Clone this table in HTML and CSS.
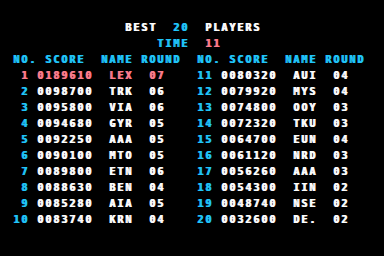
FILE: index.html
```html
<!DOCTYPE html>
<html>
<head>
<meta charset="utf-8">
<link rel="stylesheet" href="styles.css">
</head>
<body>
<main class="screen">
  <div class="line title"><span class="w">BEST</span>  <span class="c">20</span>  <span class="w">PLAYERS</span></div>
  <div class="line time"><span class="c">TIME</span>  <span class="p">11</span></div>
  <div class="board">
    <section class="half">
      <div class="line head c">NO. SCORE  NAME ROUND</div>
      <div class="row top"><span class="no">1</span><span class="sc">0189610</span><span class="nm">LEX</span><span class="rd">07</span></div>
      <div class="row"><span class="no">2</span><span class="sc">0098700</span><span class="nm">TRK</span><span class="rd">06</span></div>
      <div class="row"><span class="no">3</span><span class="sc">0095800</span><span class="nm">VIA</span><span class="rd">06</span></div>
      <div class="row"><span class="no">4</span><span class="sc">0094680</span><span class="nm">GYR</span><span class="rd">05</span></div>
      <div class="row"><span class="no">5</span><span class="sc">0092250</span><span class="nm">AAA</span><span class="rd">05</span></div>
      <div class="row"><span class="no">6</span><span class="sc">0090100</span><span class="nm">MTO</span><span class="rd">05</span></div>
      <div class="row"><span class="no">7</span><span class="sc">0089800</span><span class="nm">ETN</span><span class="rd">06</span></div>
      <div class="row"><span class="no">8</span><span class="sc">0088630</span><span class="nm">BEN</span><span class="rd">04</span></div>
      <div class="row"><span class="no">9</span><span class="sc">0085280</span><span class="nm">AIA</span><span class="rd">05</span></div>
      <div class="row"><span class="no">10</span><span class="sc">0083740</span><span class="nm">KRN</span><span class="rd">04</span></div>
    </section>
    <section class="half">
      <div class="line head c">NO. SCORE  NAME ROUND</div>
      <div class="row"><span class="no">11</span><span class="sc">0080320</span><span class="nm">AUI</span><span class="rd">04</span></div>
      <div class="row"><span class="no">12</span><span class="sc">0079920</span><span class="nm">MYS</span><span class="rd">04</span></div>
      <div class="row"><span class="no">13</span><span class="sc">0074800</span><span class="nm">OOY</span><span class="rd">03</span></div>
      <div class="row"><span class="no">14</span><span class="sc">0072320</span><span class="nm">TKU</span><span class="rd">03</span></div>
      <div class="row"><span class="no">15</span><span class="sc">0064700</span><span class="nm">EUN</span><span class="rd">04</span></div>
      <div class="row"><span class="no">16</span><span class="sc">0061120</span><span class="nm">NRD</span><span class="rd">03</span></div>
      <div class="row"><span class="no">17</span><span class="sc">0056260</span><span class="nm">AAA</span><span class="rd">03</span></div>
      <div class="row"><span class="no">18</span><span class="sc">0054300</span><span class="nm">IIN</span><span class="rd">02</span></div>
      <div class="row"><span class="no">19</span><span class="sc">0048740</span><span class="nm">NSE</span><span class="rd">02</span></div>
      <div class="row"><span class="no">20</span><span class="sc">0032600</span><span class="nm">DE.</span><span class="rd">02</span></div>
    </section>
  </div>
</main>
</body>
</html>
```
FILE: styles.css
```css
html, body {
  margin: 0;
  padding: 0;
  background: #000;
}
.screen {
  width: 384px;
  height: 256px;
  box-sizing: border-box;
  padding: 20px 0 0 13px;
  background: #000;
  color: #fcfcfc;
  font-family: "DejaVu Sans Mono", monospace;
  font-weight: bold;
  font-size: 10px;
  letter-spacing: 1.98px;
  line-height: 16px;
  text-shadow: 1px 0 currentColor;
}
.line {
  white-space: pre;
  height: 16px;
}
.title { padding-left: 112px; }
.time { padding-left: 144px; }
.w { color: #fcfcfc; }
.c { color: #20c4f8; }
.p { color: #fc7c8c; }
.board {
  display: flex;
}
.half {
  width: 184px;
}
.row {
  display: grid;
  grid-template-columns: 24px 72px 40px 16px;
  height: 16px;
}
.no {
  width: 16px;
  text-align: right;
  color: #20c4f8;
}
.top, .top .no { color: #fc7c8c; }
```
